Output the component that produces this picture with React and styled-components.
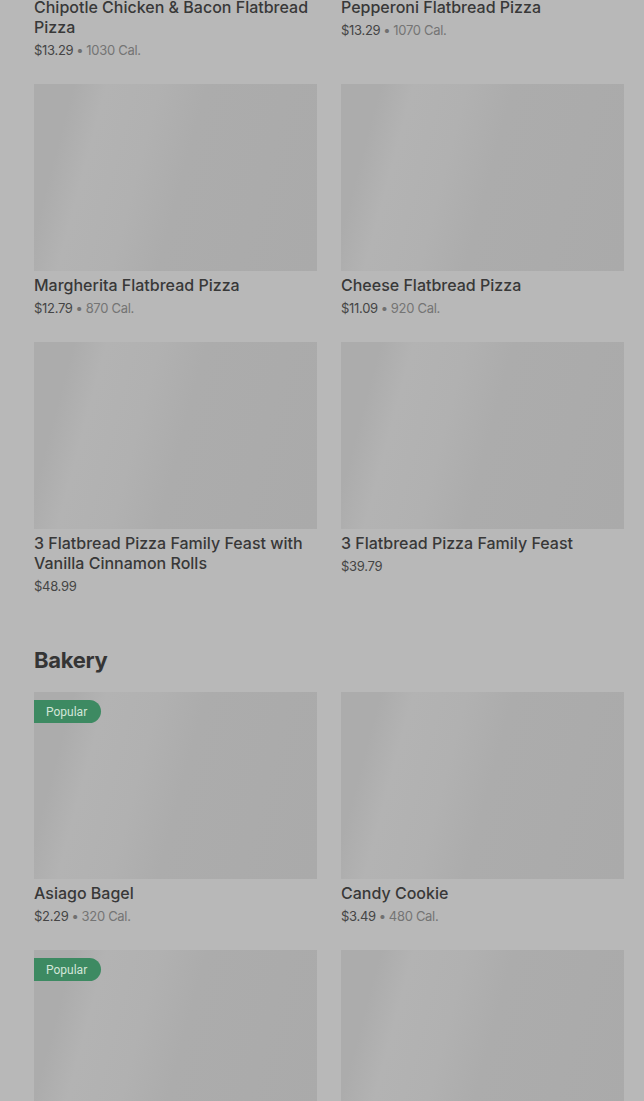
import React from "react";
import styled, { createGlobalStyle } from "styled-components";

const GlobalStyle = createGlobalStyle`
  html, body {
    margin: 0;
    padding: 0;
    background: #b8b8b8;
    overflow: hidden;
  }
  body {
    font-family: Inter, "Liberation Sans", Arial, sans-serif;
    -webkit-font-smoothing: antialiased;
  }
`;

const Page = styled.main`
  margin-top: -194px;
  padding: 0 20px 0 34px;
  display: flex;
  flex-direction: column;
  gap: 48px;
`;

const Section = styled.section`
  display: flex;
  flex-direction: column;
`;

const SectionTitle = styled.h2`
  margin: 0 0 16px;
  font-size: 22px;
  line-height: 32px;
  font-weight: 700;
  color: #353535;
  letter-spacing: -0.3px;
`;

const Grid = styled.div`
  display: grid;
  grid-template-columns: 1fr 1fr;
  column-gap: 24px;
  row-gap: 24px;
  align-items: start;
`;

const Card = styled.article`
  display: flex;
  flex-direction: column;
  min-width: 0;
`;

const ImageBox = styled.div`
  position: relative;
  height: 187px;
  background: linear-gradient(
    105deg,
    #acacac 0%,
    #acacac 12%,
    #b3b3b3 22%,
    #b1b1b1 38%,
    #acacac 52%,
    #aaaaaa 100%
  );
`;

const Badge = styled.span`
  position: absolute;
  top: 8px;
  left: 0;
  height: 23px;
  padding: 0 14px 0 12px;
  display: flex;
  align-items: center;
  background: #3d8a62;
  color: #d3e6d9;
  font-size: 12px;
  border-radius: 0 12px 12px 0;
  font-family: Roboto, "Liberation Sans", Arial, sans-serif;
`;

const Title = styled.h3`
  margin: 4px 0 0;
  font-size: 16px;
  line-height: 20px;
  font-weight: 500;
  color: #383838;
  letter-spacing: 0;
`;

const Meta = styled.div`
  margin-top: 3px;
  font-size: 13px;
  line-height: 20px;
  color: #454545;
  letter-spacing: -0.3px;
`;

const Dot = styled.span`
  color: #707070;
  margin: 0 3px;
`;

const Cal = styled.span`
  color: #747474;
`;

const flatbreads = [
  { name: "Chipotle Chicken & Bacon Flatbread Pizza", price: "$13.29", cal: "1030 Cal." },
  { name: "Pepperoni Flatbread Pizza", price: "$13.29", cal: "1070 Cal." },
  { name: "Margherita Flatbread Pizza", price: "$12.79", cal: "870 Cal." },
  { name: "Cheese Flatbread Pizza", price: "$11.09", cal: "920 Cal." },
  { name: "3 Flatbread Pizza Family Feast with Vanilla Cinnamon Rolls", price: "$48.99" },
  { name: "3 Flatbread Pizza Family Feast", price: "$39.79" },
];

const bakery = [
  { name: "Asiago Bagel", price: "$2.29", cal: "320 Cal.", popular: true },
  { name: "Candy Cookie", price: "$3.49", cal: "480 Cal." },
  { name: "Cinnamon Roll", price: "$3.99", cal: "420 Cal.", popular: true },
  { name: "Chocolate Chip Cookie", price: "$3.49", cal: "430 Cal." },
];

function Item({ item }) {
  return (
    <Card>
      <ImageBox>{item.popular && <Badge>Popular</Badge>}</ImageBox>
      <Title>{item.name}</Title>
      <Meta>
        {item.price}
        {item.cal && (
          <>
            <Dot>•</Dot>
            <Cal>{item.cal}</Cal>
          </>
        )}
      </Meta>
    </Card>
  );
}

export default function App() {
  return (
    <>
      <GlobalStyle />
      <Page>
        <Section>
          <Grid>
            {flatbreads.map((it) => (
              <Item key={it.name} item={it} />
            ))}
          </Grid>
        </Section>
        <Section>
          <SectionTitle>Bakery</SectionTitle>
          <Grid>
            {bakery.map((it) => (
              <Item key={it.name} item={it} />
            ))}
          </Grid>
        </Section>
      </Page>
    </>
  );
}
